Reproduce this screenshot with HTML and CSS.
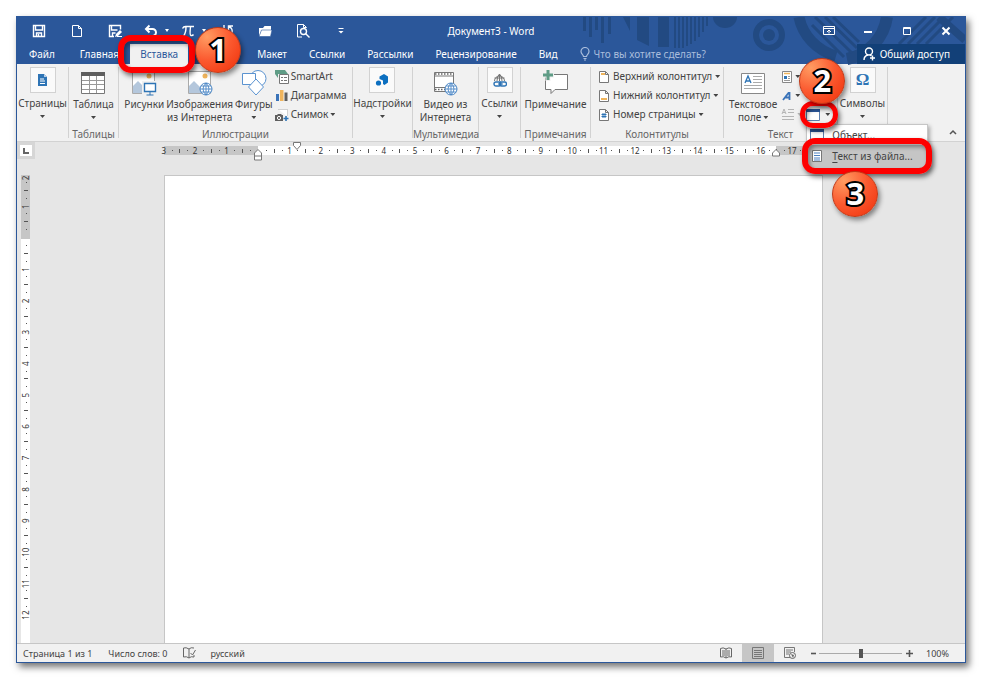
FILE: index.html
```html
<!DOCTYPE html>
<html lang="ru">
<head>
<meta charset="utf-8">
<title>Документ3 - Word</title>
<link rel="stylesheet" href="styles.css">
</head>
<body>
<main class="window">
  <header class="header">
    <svg class="decor" width="386" height="48" viewBox="0 0 386 48" aria-hidden="true">
      <g fill="#224a82">
        <path d="M4 0h3v14H4zM10 0h3v20h-3zM16 0h3v13h-3zM22 0h3v26h-3zM29 0h3v17h-3zM44 0h7v14zM58 0h12v29l-12-6zM79 0h11v30H79z"/>
        <path d="M95 0h2v31h-2zM99 0h2v31h-2zM103 0h2v31h-2zM107 0h2v29h-2zM111 0h2v27h-2zM115 0h2v24h-2zM119 0h2v20h-2zM123 0h2v15h-2zM127 0h2v9h-2z"/>
        <path d="M134 0h24a12 11 0 0 1-24 0z"/><circle cx="190" cy="18" r="6"/>
      </g>
      <g fill="none" stroke="#224a82">
        <circle cx="190" cy="18" r="13" stroke-width="6"/>
        <path d="M220 0a55 50 0 0 0 37 39" stroke-width="11"/>
        <path d="M308 0a50 50 0 0 1-40 42" stroke-width="12"/>
        <path d="M236 0l37 36M246 0l32 31M233 8l32 32M254 0l26 25M320 27l27-27M329 27l27-27M338 27l27-27M347 27l27-27" stroke-width="3"/>
        <path d="M360 0l26 23" stroke-width="8"/>
      </g>
    </svg>
    <div class="titlebar">
      <div class="quick">
        <button aria-label="Сохранить"><svg width="14" height="14" viewBox="0 0 14 14"><path d="M1.500 1.500h11v11h-11zM3.500 2v4h7V2M4.500 12.500V9h5v3.500M6.500 10v2" class="w2"/></svg></button>
        <button aria-label="Создать"><svg width="14" height="14" viewBox="0 0 14 14"><path d="M2.500 1.500h6l3 3v8h-9zM8.500 1.500v3h3" class="w"/></svg></button>
        <button aria-label="Сохранить как"><svg width="14" height="14" viewBox="0 0 14 14"><path d="M6 12.500H1.500v-11h11v4M3.500 2v4h6M4.500 12V9h3" class="w2"/><path d="M7 13l1-3 4-4 2 2-4 4z" fill="#fff"/><path d="M9 12.500h5" class="w"/></svg></button>
        <button aria-label="Отменить" class="split"><svg width="14" height="14" viewBox="0 0 14 14"><path d="M2 5h6.500a3.500 3.500 0 0 1 0 7H7M5.500 1.500L2 5l3.500 3.500" class="w2 heavy"/></svg><i class="arrow"></i></button>
        <button aria-label="Формула" class="split"><svg width="14" height="14" viewBox="0 0 14 14"><path d="M1.500 4.500q1-2 3-2H13M5 3q0 6-2.500 9M9.500 3q-1 8 .5 8.500 1.500.5 2.500-1" class="w2"/></svg><i class="arrow"></i></button>
        <button aria-label="Повторить"><svg width="14" height="14" viewBox="0 0 14 14"><path d="M9 2.500a5 5 0 1 1-6 2M8.500 6V2H13M4 1v4" class="w2"/></svg></button>
        <button aria-label="Открыть"><svg width="14" height="14" viewBox="0 0 14 14"><path d="M1 12V4h4l1.500-2H13v4H4z" fill="#fff"/><path d="M3.500 6H14l-1.500 6.500H1z" fill="#fff" stroke="#2b579a" stroke-width=".6"/></svg></button>
        <button aria-label="Просмотр"><svg width="14" height="14" viewBox="0 0 14 14"><path d="M6 13H1.500V.5h6l3 3M7.500.5v3h3" class="w"/><circle cx="7.500" cy="7.500" r="3" class="w2"/><path d="M9.500 9.500l4 4" class="w2"/></svg></button>
        <button aria-label="Настройка панели"><svg width="8" height="8" viewBox="0 0 8 8"><path d="M1.500 1.500h5" class="w"/><path d="M1.500 4h5L4 6.500z" fill="#fff"/></svg></button>
      </div>
      <h1>Документ3 - Word</h1>
      <div class="controls">
        <button aria-label="Параметры ленты"><svg width="12" height="12" viewBox="0 0 12 12"><path d="M.5 1.500h11v8H.5zM.5 3.500h11M6 8.500v-3M4 7l2-2 2 2" class="w"/></svg></button>
        <button aria-label="Свернуть"><svg width="12" height="12" viewBox="0 0 12 12"><path d="M2 7h8" class="w2 heavy"/></svg></button>
        <button aria-label="Развернуть"><svg width="12" height="12" viewBox="0 0 12 12"><path d="M2.500 2.500h7v7h-7zM2 3.500h8" class="w"/></svg></button>
        <button aria-label="Закрыть"><svg width="12" height="12" viewBox="0 0 12 12"><path d="M2.500 2.500l7 7M9.500 2.500l-7 7" class="w2 heavy"/></svg></button>
      </div>
    </div>
    <nav class="tabs">
      <a href="#" class="file">Файл</a>
      <a href="#" class="home">Главная</a>
      <a href="#" class="active">Вставка<span class="mark mark-tab"></span><b class="badge badge-tab">1</b></a>
      <a href="#" class="layout">Макет</a>
      <a href="#">Ссылки</a>
      <a href="#">Рассылки</a>
      <a href="#">Рецензирование</a>
      <a href="#">Вид</a>
      <button class="tell"><svg width="10" height="14" viewBox="0 0 10 14"><path d="M3.500 9.500C3.500 8 1 7 1 4.500a4 4 0 0 1 8 0C9 7 6.500 8 6.500 9.500zM3.500 11.500h3M4 13h2" fill="none" stroke="#a9bddc" stroke-width="1.200"/></svg>Что вы хотите сделать?</button>
      <button class="share"><svg width="13" height="14" viewBox="0 0 13 14"><circle cx="6" cy="4.500" r="3.500" class="w2"/><path d="M1 13c0-3 2-4.500 4-5M7 8l1.500 1M9.500 8.500v5M7 11h5" class="w2"/></svg>Общий доступ</button>
    </nav>
  </header>

  <section class="ribbon">
    <div class="group g-pages"><div class="tools">
      <button class="big boxed"><span class="pic"><svg width="13" height="14" viewBox="0 0 13 14"><path d="M2 1h6l3 3v9H2z" fill="#2e74b5"/><path d="M8 1v3h3" fill="#b9d0e8"/><path d="M4 6h4M4 8h5M4 10.500h5" stroke="#fff"/></svg></span>Страницы<i class="arrow"></i></button>
    </div></div>
    <div class="group g-table"><div class="tools">
      <button class="big"><span class="pic"><svg width="24" height="24" viewBox="0 0 24 24"><path d="M.5 2.500h23v20H.5z" fill="#fff" stroke="#777"/><path d="M0 1h24v4H0z" fill="#5f5f5f"/><path d="M1 9.500h22M1 13.500h22M1 18.500h22M8.500 5v17M15.500 5v17" stroke="#999"/></svg></span>Таблица<i class="arrow"></i></button>
    </div><h2>Таблицы</h2></div>
    <div class="group g-illus"><div class="tools">
      <button class="big"><span class="pic"><svg width="26" height="26" viewBox="0 0 26 26"><path d="M1.500 1.500h22v22h-22z" fill="#fff" stroke="#aaa"/><path d="M2 23v-7l5-5 12 12z" fill="#b4c7dc"/><circle cx="18" cy="6" r="2.500" fill="#efb45c"/><path d="M11 11h15v15H11z" fill="#f1f1f1"/><path d="M13.500 13.500h11v8h-11z" fill="#fff" stroke="#2e74b5" stroke-width="1.400"/><path d="M19 22v3M15.500 25h7" stroke="#2e74b5"/></svg></span>Рисунки</button>
      <button class="big"><span class="pic"><svg width="26" height="26" viewBox="0 0 26 26"><path d="M1.500 1.500h22v22h-22z" fill="#fff" stroke="#aaa"/><path d="M2 23v-7l5-5 12 12z" fill="#b4c7dc"/><circle cx="18" cy="6" r="2.500" fill="#efb45c"/><use href="#globe" x="13" y="13"/></svg></span>Изображения<br>из Интернета</button>
      <button class="big"><span class="pic"><svg width="26" height="26" viewBox="0 0 26 26" fill="#fff" stroke="#5b93d0"><circle cx="17" cy="8.500" r="8"/><path d="M1.500 3.500h13v11h-13z"/><path d="M15 9l7.500 8-7.500 8-7.500-8z"/></svg></span>Фигуры<i class="arrow"></i></button>
      <div class="stack">
        <button><svg width="14" height="14" viewBox="0 0 14 14"><path d="M0 0h10l3 4H3V8L0 4z" fill="#5f9c86"/><path d="M4.500 4.500h9v9h-9z" fill="#fff" stroke="#777"/><path d="M6 7.500h2M9 7.500h3M6 10.500h2M9 10.500h3" stroke="#777"/></svg>SmartArt</button>
        <button><svg width="14" height="14" viewBox="0 0 14 14"><path d="M1 5h3v7H1z" fill="#3b74b9"/><path d="M5 1h3.500v11H5z" fill="#efb45c"/><path d="M9.500 3.500h3V12h-3z" fill="#5f5f5f"/></svg>Диаграмма</button>
        <button><svg width="14" height="14" viewBox="0 0 14 14"><path d="M3.500 1.500h9v7" fill="#fff" stroke="#aaa" stroke-dasharray="1 1"/><path d="M0 7h2l1-1h3l1 1h1v6H0z" fill="#5f5f5f"/><circle cx="4" cy="10" r="1.600" fill="none" stroke="#fff"/><path d="M11 8v5M8.500 10.500h5" stroke="#2e74b5" stroke-width="1.600"/></svg>Снимок<i class="arrow"></i></button>
      </div>
    </div><h2>Иллюстрации</h2></div>
    <div class="group g-addins"><div class="tools">
      <button class="big boxed"><span class="pic"><svg width="14" height="14" viewBox="0 0 14 14"><path d="M4.500 3.500L9 1l4 2.500v6L9.500 12 8 11V7.500L4.500 6z" fill="#0c6fc0"/><circle cx="3.500" cy="10" r="2.600" fill="#0c6fc0"/></svg></span>Надстройки<i class="arrow"></i></button>
    </div></div>
    <div class="group g-media"><div class="tools">
      <button class="big"><span class="pic"><svg width="26" height="26" viewBox="0 0 26 26"><path d="M2.500 2.500h19v19h-19z" fill="#fff" stroke="#777"/><path d="M3 4h18M3 19.500h18" stroke="#666" stroke-width="1.500" stroke-dasharray="1.500 1.500"/><path d="M3 6h18M3 17.500h18" stroke="#777"/><use href="#globe" x="13" y="13"/></svg></span>Видео из<br>Интернета</button>
    </div><h2>Мультимедиа</h2></div>
    <div class="group g-links"><div class="tools">
      <button class="big boxed"><span class="pic"><svg width="14" height="14" viewBox="0 0 14 14"><path d="M1.500 8a5 5 0 1 1 10 0M1.500 5h10M6.500 1v7M4 8q0-5 2.500-7Q9 3 9 8" fill="none" stroke="#777"/><path d="M3 9h3a2 2 0 0 1 0 4H3a2 2 0 0 1 0-4zM8.500 9h3a2 2 0 0 1 0 4h-3a2 2 0 0 1 0-4z" fill="#fafafa" stroke="#2e74b5" stroke-width="1.400"/><path d="M5 11h5" stroke="#2e74b5"/></svg></span>Ссылки<i class="arrow"></i></button>
    </div></div>
    <div class="group g-notes"><div class="tools">
      <button class="big"><span class="pic"><svg width="26" height="26" viewBox="0 0 26 26"><path d="M2.500 4.500h22v15H12l-4 4v-4H2.500z" fill="#fff" stroke="#777"/><path d="M5 0v11M0 5h11" stroke="#f1f1f1" stroke-width="5"/><path d="M5 0v10M0 5h10" stroke="#5f9c86" stroke-width="3"/></svg></span>Примечание</button>
    </div><h2>Примечания</h2></div>
    <div class="group g-heads"><div class="tools">
      <div class="stack">
        <button><svg width="12" height="14" viewBox="0 0 12 14"><use href="#sheet"/><path d="M3 3h4v2H3z" fill="#efb45c"/></svg>Верхний колонтитул<i class="arrow"></i></button>
        <button><svg width="12" height="14" viewBox="0 0 12 14"><use href="#sheet"/><path d="M3 9h6v2H3z" fill="#efb45c"/></svg>Нижний колонтитул<i class="arrow"></i></button>
        <button><svg width="12" height="14" viewBox="0 0 12 14"><use href="#sheet"/><path d="M5 5v5M7 5v5M3.500 6.500h5M3.500 8.500h5" stroke="#2e74b5"/></svg>Номер страницы<i class="arrow"></i></button>
      </div>
    </div><h2>Колонтитулы</h2></div>
    <div class="group g-text"><div class="tools">
      <button class="big"><span class="pic"><svg width="24" height="24" viewBox="0 0 24 24"><path d="M.5 2.500h23v20H.5z" fill="#fff" stroke="#888"/><path d="M4 12l3-7 3 7M5 10h4" fill="none" stroke="#2e74b5" stroke-width="1.300"/><path d="M12 5.500h9M12 8.500h9M12 11.500h9M3 14.500h18M3 17.500h18" stroke="#aaa"/></svg></span>Текстовое<br><span>поле<i class="arrow"></i></span></button>
      <div class="stack">
        <button aria-label="Экспресс-блоки"><svg width="12" height="14" viewBox="0 0 12 14"><path d="M1.500 1.500h9v11h-9z" fill="#fff" stroke="#888"/><path d="M3 3.500h6" stroke="#efb45c" stroke-width="1.500"/><path d="M3 6h3v3H3z" fill="#2e74b5"/><path d="M7 6.500h2M7 8.500h2M3 10.500h6" stroke="#999"/></svg><i class="arrow"></i></button>
        <button aria-label="WordArt"><svg width="12" height="14" viewBox="0 0 12 14"><path d="M2 11L7.500 4h1v7M4.500 8.500h4" fill="none" stroke="#3b74b9" stroke-width="1.800"/></svg><i class="arrow"></i></button>
        <button aria-label="Буквица" disabled><svg width="14" height="14" viewBox="0 0 14 14"><path d="M1 6l2-5 2 5M2 4.500h2M7 1.500h6M7 4.500h6M1 8.500h12M1 11.500h12" fill="none" stroke="#b5b5b5"/></svg><i class="arrow"></i></button>
      </div>
      <div class="stack last">
        <div class="object">
          <button aria-label="Объект"><svg width="14" height="12" viewBox="0 0 14 12"><use href="#object"/></svg><i class="arrow"></i></button>
          <div class="menu">
            <button><svg width="14" height="12" viewBox="0 0 14 12"><use href="#object"/></svg>Объект...</button>
            <button class="hover"><svg width="12" height="14" viewBox="0 0 12 14"><path d="M1.500 1.500h9v11h-9z" fill="#fff" stroke="#777"/><path d="M3 4h6M3 6.500h6M3 9h6M3 11h6" stroke="#4b7fc0"/></svg><span><u>Т</u>екст из файла...</span><span class="mark mark-item"></span><b class="badge badge-item">3</b></button>
          </div>
          <span class="mark mark-object"></span><b class="badge badge-object">2</b>
        </div>
      </div>
    </div><h2>Текст</h2></div>
    <div class="group g-symbols"><div class="tools">
      <button class="big boxed"><span class="pic omega">Ω</span>Символы<i class="arrow"></i></button>
    </div></div>
    <button class="collapse" aria-label="Свернуть ленту"><svg width="8" height="6" viewBox="0 0 8 6"><path d="M1 5l3-3 3 3" fill="none" stroke="#555" stroke-width="1.500"/></svg></button>
  </section>

  <section class="workspace">
    <div class="rulers-top">
      <button class="corner" aria-label="Табуляция"><svg width="6" height="6" viewBox="0 0 6 6"><path d="M1 0v5h5" fill="none" stroke="#666" stroke-width="2"/></svg></button>
      <svg class="hruler" id="hruler" width="662" height="20" viewBox="0 0 662 20"></svg>
    </div>
    <div class="canvas">
      <div class="vwrap"><svg id="vruler" width="9" height="470" viewBox="0 0 9 470"></svg></div>
      <article class="page" contenteditable="true" aria-label="Документ"></article>
    </div>
  </section>

  <footer class="status">
    <span class="s-page">Страница 1 из 1</span>
    <span class="s-words">Число слов: 0</span>
    <button aria-label="Правописание" class="s-spell"><svg width="13" height="12" viewBox="0 0 13 12"><path d="M6 2Q3 0 .5 1v9q3-1 5.500 1zM6 2q2-2 5-1M6 11q2-2 5-1V8M7.500 6l2 2 3-5" fill="none" stroke="#666"/></svg></button>
    <span>русский</span>
    <div class="views">
      <button aria-label="Режим чтения"><svg width="12" height="12" viewBox="0 0 12 12"><path d="M6 2Q3 0 .5 1.500v8.500q3-1 5.500 1 3-2 5.500-1V1.500Q9 0 6 2v9M2 4h3M2 6h3M2 8h3M7 4h3M7 6h3M7 8h3" fill="none" stroke="#666"/></svg></button>
      <button aria-label="Разметка страницы" class="on"><svg width="12" height="12" viewBox="0 0 12 12"><path d="M.5.5h11v11H.5zM2 3.500h8M2 5.500h8M2 7.500h8M2 9.500h8" fill="none" stroke="#777"/></svg></button>
      <button aria-label="Веб-документ"><svg width="12" height="12" viewBox="0 0 12 12"><path d="M6 10.500H.5V.5h10V5M2 3h7M2 5h5M2 7h3" fill="none" stroke="#777"/><circle cx="8.500" cy="8.500" r="3" fill="#f1f1f1" stroke="#666"/><path d="M7 7l3 1-1 3z" fill="#666"/></svg></button>
    </div>
    <button class="zoom-btn" aria-label="Уменьшить"><svg width="7" height="7" viewBox="0 0 7 7"><path d="M1 3.500h5" stroke="#555" stroke-width="1.600"/></svg></button>
    <input type="range" min="0" max="100" value="50" aria-label="Масштаб">
    <button class="zoom-btn" aria-label="Увеличить"><svg width="7" height="7" viewBox="0 0 7 7"><path d="M0 3.500h7M3.500 0v7" stroke="#555" stroke-width="1.600"/></svg></button>
    <span class="s-zoom">100%</span>
  </footer>
</main>
<svg class="defs" aria-hidden="true">
  <symbol id="globe" overflow="visible"><circle cx="6" cy="6" r="6" fill="#fff" stroke="#4a86c5"/><path d="M0 6h12M6 0v12M1 3h10M1 9h10M6 0q-6 6 0 12M6 0q6 6 0 12" fill="none" stroke="#4a86c5" stroke-width=".9"/></symbol>
  <symbol id="sheet" overflow="visible"><path d="M1.500 1.500h6l3 3v8h-9zM7.500 1.500v3h3" fill="#fff" stroke="#777"/></symbol>
  <symbol id="object" overflow="visible"><path d="M.5.500h13v11H.5z" fill="#fff" stroke="#5d7fae"/><path d="M0 0h14v3H0z" fill="#2b579a"/></symbol>
</svg>
<script src="rulers.js"></script>
</body>
</html>
```
FILE: rulers.js
```js
// Draws both centimetre scales: numbers, quarter dots and half-centimetre bars.
const CM = 31.42;

function scale(length, origin, from, to, mid) {
  let out = "";
  for (let n = from; n <= to; n++) {
    const at = origin + n * CM;
    if (n !== 0) out += `<text x="${at}" y="${mid + 3}" text-anchor="middle">${Math.abs(n)}</text>`;
    [[0.25, 1], [0.5, 4], [0.75, 1]].forEach(([part, size]) => {
      const p = Math.round(at + part * CM);
      const from = Math.round(mid - size / 2);
      if (p < length) out += `<rect x="${p}" y="${from}" width="1" height="${size}"/>`;
    });
  }
  return out;
}

document.getElementById("hruler").innerHTML =
  `<rect class="margin" x="3" y="4" width="659" height="9"/>
   <rect class="sheet" x="97" y="4" width="518" height="9"/>
   ${scale(660, 97, -3, 17, 8.5)}
   <g class="marker"><path d="M132.500.500h7v3l-3.500 4-3.500-4z"/><path d="M97 7.500l3.500 3.500v7h-7v-7zM93.500 14h7"/><path d="M615 7.500l3.500 3.500v3h-7v-3z"/></g>`;

document.getElementById("vruler").innerHTML =
  `<rect class="margin" width="9" height="64"/>
   <rect class="sheet" y="64" width="9" height="406"/>
   <g transform="translate(0 470) rotate(-90)">${scale(470, 407, -12, 1, 5)}
   <text x="467" y="8" text-anchor="middle">2</text></g>`;
```
FILE: styles.css
```css
* { box-sizing: border-box; }
body {
  margin: 0;
  padding: 16px;
  height: 100vh;
  background: #fff;
  color: #444;
  font: 10px/13px "Noto Sans", "Open Sans", sans-serif;
}
button {
  margin: 0;
  padding: 0;
  border: 0;
  background: none;
  color: inherit;
  font: inherit;
}
a { color: inherit; text-decoration: none; }
svg { flex: none; }
.defs { position: absolute; width: 0; height: 0; }
.w, .w2 { fill: none; stroke: #fff; stroke-width: 1; }
.w2 { stroke-width: 1.4; }
.heavy { stroke-width: 2; }
.window {
  display: flex;
  flex-direction: column;
  height: 100%;
  border: 1px solid #2b579a;
  background: #e6e6e6;
  box-shadow: 3px 4px 7px rgba(0, 0, 0, .55);
}
.arrow {
  display: inline-block;
  width: 5px;
  height: 3px;
  background: currentColor;
  clip-path: polygon(0 0, 100% 0, 50% 100%);
  flex: none;
}

.header { position: relative; background: #2b579a; color: #fff; }
.decor { position: absolute; top: 0; right: 0; }
.titlebar {
  position: relative;
  display: grid;
  grid-template-columns: 1fr auto 1fr;
  align-items: center;
  height: 27px;
}
.quick { display: flex; align-items: center; padding-left: 3px; }
.quick button { display: flex; align-items: center; justify-content: center; width: 38px; height: 26px; }
.quick button.split { width: 37px; gap: 7px; padding-left: 8px; }
.quick .arrow { width: 4px; }
h1 { margin: 0; padding-top: 2px; font-size: 10px; font-weight: 400; }
.controls { display: flex; justify-content: flex-end; }
.controls button { display: flex; align-items: center; justify-content: center; width: 39px; height: 26px; }

.tabs { position: relative; display: flex; align-items: stretch; height: 20px; line-height: 20px; }
.tabs a { padding: 0 11px; }
.tabs .file { padding: 0 12px; }
.tabs .home { padding-left: 13px; }
.tabs .active { position: relative; width: 58px; padding: 0; text-align: center; background: #f1f1f1; color: #2b579a; }
.tabs .layout { margin-left: 58px; }
.tell { display: flex; align-items: center; gap: 4px; margin-left: 11px; color: #a9bddc; }
.share { display: flex; align-items: center; gap: 4px; margin-left: auto; padding: 0 15px 0 6px; background: #124078; }

.ribbon { display: flex; height: 78px; padding: 3px 0 0; background: #f1f1f1; border-bottom: 1px solid #d2d2d2; }
.group { position: relative; display: flex; flex-direction: column; flex: none; height: 71px; border-right: 1px solid #d2d2d2; }
.tools { display: flex; flex: none; justify-content: center; height: 61px; }
h2 { margin: 0; color: #666; font-size: 10px; font-weight: 400; text-align: center; white-space: nowrap; }
.g-pages { width: 52px; }
.g-table { width: 50px; }
.g-illus { width: 234px; }
.g-addins { width: 60px; }
.g-media { width: 66px; }
.g-links { width: 42px; }
.g-notes { width: 70px; }
.g-heads { width: 133px; }
.g-text { width: 114px; }
.g-symbols { width: 50px; }
.g-illus .tools { gap: 2px; }
.g-heads .tools { justify-content: flex-start; padding-left: 7px; }
.g-text .tools { gap: 4px; justify-content: flex-start; padding-left: 5px; }
.big { display: flex; flex-direction: column; align-items: center; white-space: nowrap; }
.pic { display: flex; align-items: center; justify-content: center; height: 31px; }
.big > .arrow { margin-top: 5px; }
.boxed .pic { width: 26px; height: 26px; margin-bottom: 4px; border: 1px solid #d2d2d2; background: #fafafa; }
.omega { color: #2e74b5; font: bold 17px "Liberation Serif", serif; }
.big span .arrow { margin: 0 0 2px 2px; }
.stack { display: flex; flex-direction: column; }
.stack button { display: flex; align-items: center; gap: 2px; height: 19px; white-space: nowrap; }
.g-heads .stack button { gap: 3px; }
.stack button:disabled { color: #b5b5b5; }
.last { justify-content: flex-end; padding-bottom: 4px; }
.collapse { align-self: flex-end; margin: 0 8px 0 auto; padding-bottom: 3px; }

.object { position: relative; }
.object > button { gap: 5px; }
.menu {
  position: absolute;
  z-index: 2;
  top: 19px;
  left: 0;
  width: 122px;
  border: 1px solid #c6c6c6;
  background: #fff;
  box-shadow: 2px 2px 4px rgba(0, 0, 0, .3);
}
.menu button { position: relative; width: 100%; height: 20px; padding-left: 3px; gap: 8px; }
.menu .hover { background: #c5c5c5; height: 22px; }
.menu .hover svg { margin: 0 1px; }
.menu u { text-underline-offset: 2px; }

.mark { position: absolute; border: 6px solid #fd0000; border-radius: 13px; box-shadow: 2px 3px 5px rgba(0, 0, 0, .55), inset 2px 3px 4px rgba(0, 0, 0, .4); }
.mark-tab { inset: -9px -7px -9px -12px; z-index: 3; }
.mark-object { inset: -4px -6px; z-index: 3; border-width: 5px; width: 38px; }
.mark-item { inset: -7px -5px; z-index: 4; }
.badge {
  position: absolute;
  z-index: 5;
  width: 46px;
  height: 46px;
  border: 1px solid #c03a18;
  border-radius: 50%;
  background: radial-gradient(circle at 25% 20%, #ff9c62, #fb5a30 48%, #ef3009);
  box-shadow: 2px 3px 5px rgba(0, 0, 0, .45);
  color: #fff;
  font: bold 31px/43px "Noto Sans", sans-serif;
  text-align: center;
  -webkit-text-stroke: 4px #000;
  paint-order: stroke fill;
}
.badge-tab { left: 65px; top: -17px; }
.badge-object { left: -7px; top: -47px; }
.badge-item { left: 25px; top: 26px; }

.workspace { flex: 1; min-height: 0; display: flex; flex-direction: column; overflow: hidden; }
.rulers-top { display: flex; align-items: flex-start; height: 33px; }
.corner { display: grid; place-items: center; width: 18px; height: 17px; border: 3px solid #d6d6d6; background: #fff; }
.hruler { margin-left: 126px; }
.workspace text { font: 8px "Noto Sans", sans-serif; fill: #333; }
.workspace rect { fill: #555; }
.workspace .margin { fill: #c6c6c6; }
.workspace .sheet { fill: #fff; }
.marker { fill: #fff; stroke: #777; }
.canvas { flex: 1; min-height: 0; display: flex; }
.vwrap { flex: none; width: 147px; padding-left: 4px; overflow: hidden; }
.vwrap svg { display: block; }
.page { flex: 1; margin-right: 142px; border: 1px solid #c6c6c6; border-bottom: 0; background: #fff; outline: none; }

.status { display: flex; align-items: center; height: 19px; padding: 0 16px 0 6px; border-top: 1px solid #c6c6c6; background: #f1f1f1; font-size: 9px; }
.s-words { margin-left: 16px; }
.s-spell { display: flex; margin: 0 14px 0 16px; }
.views { display: flex; align-self: stretch; margin: 0 4px 0 auto; }
.views button { display: grid; place-items: center; width: 32px; }
.views .on { background: #c6c6c6; }
.zoom-btn { display: flex; }
.s-zoom { margin-left: 13px; }
input[type="range"] {
  appearance: none;
  width: 83px;
  height: 9px;
  margin: 0 4px 0 2px;
  background: linear-gradient(#aaa, #aaa) center / 100% 1px no-repeat;
}
input[type="range"]::-webkit-slider-thumb { appearance: none; width: 4px; height: 9px; background: #555; }
```
